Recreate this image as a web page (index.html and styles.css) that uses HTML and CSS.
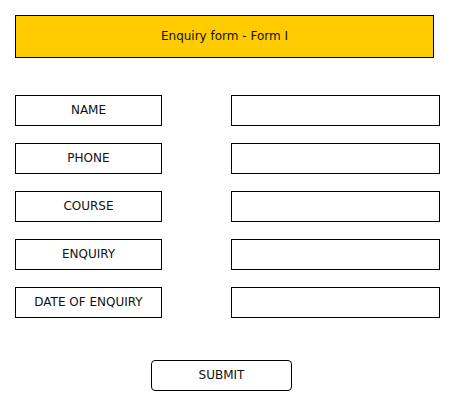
FILE: index.html
```html
<!DOCTYPE html>
<html>
<head>
<meta charset="utf-8">
<link rel="stylesheet" href="styles.css">
</head>
<body>
<div class="page">
  <div class="title">Enquiry form - Form I</div>
  <div class="form">
    <div class="label">NAME</div><div class="field"></div>
    <div class="label">PHONE</div><div class="field"></div>
    <div class="label">COURSE</div><div class="field"></div>
    <div class="label">ENQUIRY</div><div class="field"></div>
    <div class="label">DATE OF ENQUIRY</div><div class="field"></div>
  </div>
  <div class="actions"><div class="submit">SUBMIT</div></div>
</div>
</body>
</html>
```
FILE: styles.css
```css
* { box-sizing: border-box; }
body { margin: 0; background: #fff; font-family: "DejaVu Sans", sans-serif; font-size: 12px; color: #111; }
.page { padding: 15px 0 0 15px; }
.title {
  width: 419px; height: 43px;
  background: #ffcc00; border: 1px solid #000;
  display: flex; align-items: center; justify-content: center;
  padding-bottom: 1px;
}
.form {
  margin-top: 37px;
  display: grid;
  grid-template-columns: 147px 209px;
  column-gap: 69px;
  row-gap: 17px;
}
.label, .field { height: 31px; border: 1px solid #000; background: #fff; }
.label { display: flex; align-items: center; justify-content: center; padding-bottom: 1px; }
.actions { margin-top: 42px; padding-left: 136px; }
.submit {
  width: 141px; height: 31px; border: 1px solid #000; border-radius: 4px;
  display: flex; align-items: center; justify-content: center; padding-bottom: 1px;
}
```
